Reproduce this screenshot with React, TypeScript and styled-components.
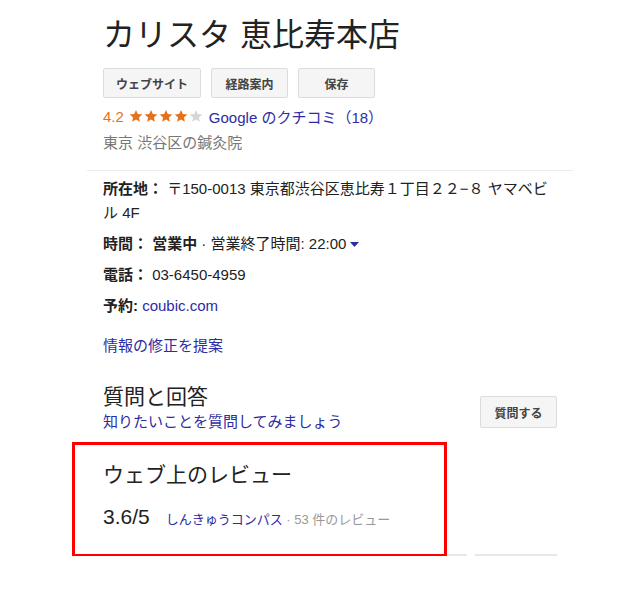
import styled, { createGlobalStyle } from 'styled-components';

const GlobalStyle = createGlobalStyle`
	body {
		margin: 0;
		background: #fff;
		font-family: "Liberation Sans", "Noto Sans CJK JP", sans-serif;
		color: #222;
	}
`;

const Panel = styled.div`
	margin-left: 87px;
	width: 486px;
`;

const Inner = styled.div`
	padding: 0 16px;
`;

const Title = styled.h1`
	margin: 15px 0 0;
	font-size: 32px;
	line-height: 40px;
	font-weight: normal;
	color: #222;
`;

const ButtonRow = styled.div`
	display: flex;
	gap: 10px;
	margin-top: 13px;
`;

const Button = styled.button<{ $h?: number }>`
	height: ${p => (p.$h ? p.$h : 30)}px;
	min-width: 77px;
	padding: 0 12px;
	background: #f5f5f5;
	border: 1px solid #dcdcdc;
	border-radius: 2px;
	font-family: inherit;
	font-size: 12px;
	font-weight: bold;
	color: #444;
`;

const RatingLine = styled.div`
	display: flex;
	align-items: center;
	margin-top: 8px;
	height: 20px;
	font-size: 15px;
`;

const Score = styled.span`
	color: #e7711b;
	margin-right: 5px;
`;

const Stars = styled.span`
	display: inline-flex;
	gap: 1px;
	margin-right: 6px;
`;

const Link = styled.a`
	color: #2c2ca3;
	text-decoration: none;
`;

const Category = styled.div`
	margin-top: 7px;
	line-height: 20px;
	font-size: 15px;
	color: #777;
`;

const Divider = styled.div`
	height: 1px;
	background: #ebebeb;
	margin-top: 17px;
`;

const Details = styled.div`
	padding-top: 6px;
`;

const Row = styled.div`
	font-size: 15px;
	line-height: 24px;
	color: #222;
	& + & {
		margin-top: 7px;
	}
`;

const Label = styled.b`
	font-weight: bold;
`;

const Caret = styled.svg`
	margin-left: 4px;
	vertical-align: middle;
`;

const Suggest = styled.div`
	margin-top: 16px;
	font-size: 15px;
	line-height: 24px;
`;

const QaBlock = styled.div`
	display: flex;
	justify-content: space-between;
	align-items: flex-start;
	margin-top: 25px;
`;

const SectionTitle = styled.div`
	font-size: 21px;
	line-height: 28px;
	color: #222;
`;

const QaLink = styled(Link)`
	display: block;
	font-size: 15px;
	line-height: 22px;
`;

const AskButton = styled(Button)`
	margin-top: 13px;
`;

const Reviews = styled.section`
	position: relative;
	padding-top: 28px;
`;

const ReviewLine = styled.div`
	display: flex;
	align-items: baseline;
	margin-top: 16px;
	height: 28px;
`;

const Big = styled.span`
	font-size: 21px;
	color: #222;
	margin-right: 16px;
`;

const Source = styled(Link)`
	font-size: 13px;
`;

const Count = styled.span`
	font-size: 13px;
	color: #999;
	white-space: pre;
`;

const CardEdges = styled.div`
	display: flex;
	gap: 8px;
	margin-top: 21px;
`;

const Edge = styled.div<{ $w: number }>`
	width: ${p => p.$w}px;
	height: 2px;
	background: #e8e8e8;
`;

const Highlight = styled.div`
	position: absolute;
	left: -31px;
	top: 9px;
	width: 375px;
	height: 115px;
	box-sizing: border-box;
	border: 3px solid #f00;
	pointer-events: none;
`;

function Star({ on }: { on: boolean }) {
	return (
		<svg width="14" height="14" viewBox="0 0 24 24">
			<path
				d="M12 1.5l3.1 7.1 7.7.7-5.8 5.1 1.7 7.6L12 18l-6.7 4 1.7-7.6-5.8-5.1 7.7-.7z"
				fill={on ? '#e7711b' : '#d6d6d6'}
			/>
		</svg>
	);
}

export default function App() {
	return (
		<>
			<GlobalStyle />
			<Panel>
				<Inner>
					<Title>カリスタ 恵比寿本店</Title>
					<ButtonRow>
						<Button>ウェブサイト</Button>
						<Button>経路案内</Button>
						<Button>保存</Button>
					</ButtonRow>
					<RatingLine>
						<Score>4.2</Score>
						<Stars>
							{[1, 2, 3, 4, 5].map(i => (
								<Star key={i} on={i <= 4} />
							))}
						</Stars>
						<Link href="#">Google のクチコミ（18）</Link>
					</RatingLine>
					<Category>東京 渋谷区の鍼灸院</Category>
				</Inner>
				<Divider />
				<Inner>
					<Details>
						<Row>
							<Label>所在地：</Label> 〒150-0013 東京都渋谷区恵比寿１丁目２２−８ ヤマベビル 4F
						</Row>
						<Row>
							<Label>時間：</Label> <Label>営業中</Label> · 営業終了時間: 22:00
							<Caret width="9" height="6" viewBox="0 0 9 6">
								<path d="M0 0h9L4.5 5z" fill="#2c2ca3" />
							</Caret>
						</Row>
						<Row>
							<Label>電話：</Label> 03-6450-4959
						</Row>
						<Row>
							<Label>予約:</Label> <Link href="#">coubic.com</Link>
						</Row>
					</Details>
					<Suggest>
						<Link href="#">情報の修正を提案</Link>
					</Suggest>
					<QaBlock>
						<div>
							<SectionTitle>質問と回答</SectionTitle>
							<QaLink href="#">知りたいことを質問してみましょう</QaLink>
						</div>
						<AskButton $h={32}>質問する</AskButton>
					</QaBlock>
					<Reviews>
						<SectionTitle>ウェブ上のレビュー</SectionTitle>
						<ReviewLine>
							<Big>3.6/5</Big>
							<Source href="#">しんきゅうコンパス</Source>
							<Count> · 53 件のレビュー</Count>
						</ReviewLine>
						<CardEdges>
							<Edge $w={364} />
							<Edge $w={82} />
						</CardEdges>
						<Highlight />
					</Reviews>
				</Inner>
			</Panel>
		</>
	);
}
